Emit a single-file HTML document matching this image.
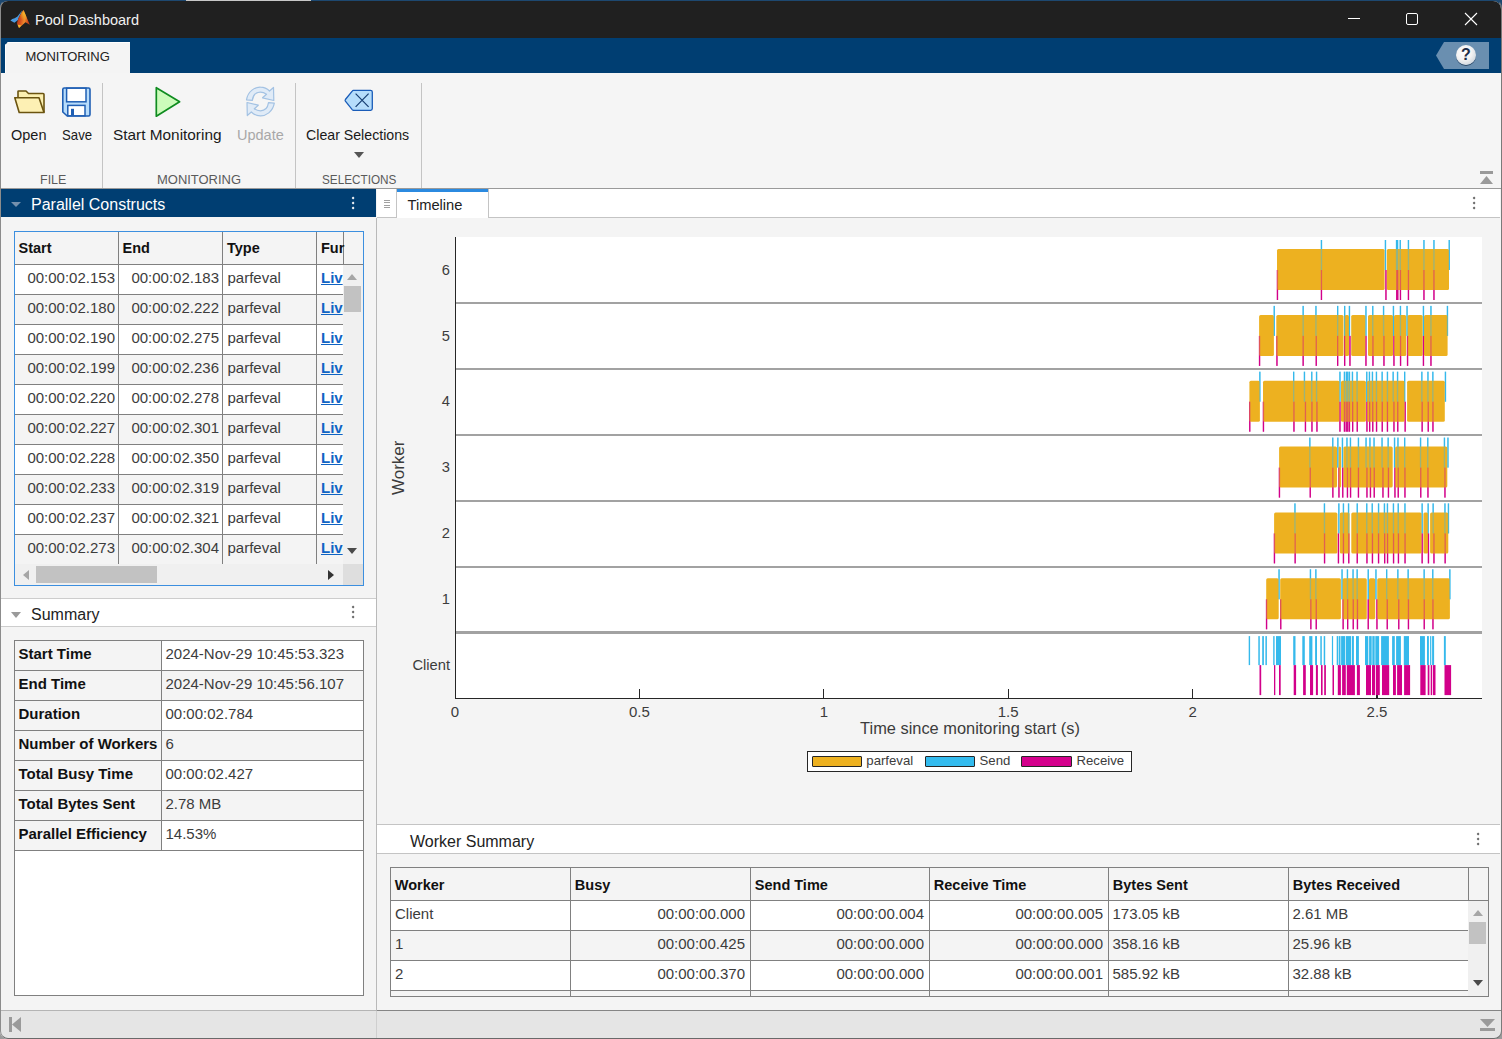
<!DOCTYPE html>
<html><head><meta charset="utf-8">
<style>
*{margin:0;padding:0;box-sizing:border-box}
html,body{width:1502px;height:1039px;overflow:hidden;background:linear-gradient(#1d4870 0,#1d4870 500px,#9a9a9a 500px);font-family:"Liberation Sans",sans-serif}
.a{position:absolute}
.t{position:absolute;white-space:nowrap;line-height:1}
#win{position:absolute;left:0;top:0;width:1502px;height:1039px;overflow:hidden;background:#f4f4f4;clip-path:inset(1px 1px 0 0 round 8px 8px 8px 8px)}
.sep{position:absolute;width:1px;background:#c4c4c4}
.lbl{position:absolute;white-space:nowrap;line-height:1;font-size:12.5px;color:#5a5a5a}
.btn{position:absolute;white-space:nowrap;line-height:1;font-size:14.5px;color:#1a1a1a}
.dots{position:absolute;width:3px;height:14px}
.dots i{position:absolute;left:0;width:3px;height:3px;border-radius:1px;transform:rotate(45deg)}
</style></head><body>
<div class="a" style="left:186px;top:0;width:125px;height:1px;background:#c8c8c8"></div>
<div id="win">
 <!-- title bar -->
 <div class="a" style="left:0;top:0;width:1502px;height:38px;background:#202020"></div>
 <svg class="a" style="left:0;top:0" width="40" height="40" viewBox="0 0 40 40">
  <defs><linearGradient id="lg1" x1="0" y1="0" x2="1" y2="0.3"><stop offset="0" stop-color="#9a2216"/><stop offset="0.45" stop-color="#d9541e"/><stop offset="0.7" stop-color="#f08a2c"/><stop offset="1" stop-color="#c8401a"/></linearGradient>
  <radialGradient id="rg1" cx="0.55" cy="0.2" r="0.4"><stop offset="0" stop-color="#f6c02a" stop-opacity="0.9"/><stop offset="1" stop-color="#f6c02a" stop-opacity="0"/></radialGradient></defs>
  <path d="M10.4 20.4 Q12 18.5 14.7 18.2 L17.5 16.5 L22.5 10.1 L20.5 14 L18.8 17.5 L17.9 20.1 L14.4 22.8 Z" fill="#4a9ae0"/>
  <path d="M23.6 9.9 L29.8 24.7 L25.5 22.3 L19 27.9 L16.9 23.3 L18.5 18 L21.5 12.5 Z" fill="url(#lg1)"/>
  <path d="M23.6 9.9 L29.8 24.7 L25.5 22.3 L19 27.9 L16.9 23.3 L18.5 18 L21.5 12.5 Z" fill="url(#rg1)"/>
  <path d="M17.5 24.5 L19 27.9 L21.5 25.5 Z" fill="#f2b830"/>
 </svg>
 <div class="t" style="left:35px;top:13px;font-size:14.5px;color:#f0f0f0">Pool Dashboard</div>
 <!-- window controls -->
 <div class="a" style="left:1348px;top:18px;width:12px;height:1px;background:#fff"></div>
 <div class="a" style="left:1406px;top:13px;width:12px;height:12px;border:1px solid #fff;border-radius:2px"></div>
 <svg class="a" style="left:1464px;top:12px" width="14" height="14" viewBox="0 0 14 14"><path d="M1 1 L13 13 M13 1 L1 13" stroke="#fff" stroke-width="1.1"/></svg>
 <!-- tab strip -->
 <div class="a" style="left:0;top:38px;width:1502px;height:35px;background:#003e72"></div>
 <div class="a" style="left:5px;top:42px;width:125px;height:31px;background:#f4f4f4;border-left:1px solid #fff;border-top:1px solid #fff;clip-path:polygon(3px 0,100% 0,100% 100%,0 100%,0 3px)"></div>
 <div class="t" style="left:25.5px;top:50px;font-size:13px;color:#222">MONITORING</div>
 <!-- help -->
 <div class="a" style="left:1436px;top:42px;width:53px;height:27px;background:#6a8fb0;clip-path:polygon(8px 0,100% 0,100% 100%,8px 100%,0 50%)"></div>
 <div class="a" style="left:1456px;top:45px;width:20px;height:20px;border-radius:50%;background:radial-gradient(circle at 40% 35%,#ffffff 0,#f2f2f2 45%,#b8c4d0 100%);box-shadow:0 1px 0 #2c4866"></div>
 <div class="t" style="left:1456px;width:20px;text-align:center;top:47.2px;font-size:16px;font-weight:bold;color:#1e2d47">?</div>
 <!-- ribbon -->
 <div class="a" style="left:0;top:73px;width:1502px;height:115px;background:#f5f5f5"></div>
 <div class="a" style="left:0;top:188px;width:1502px;height:1px;background:#9a9a9a"></div>
 <div class="sep" style="left:102px;top:83px;height:105px"></div>
 <div class="sep" style="left:295px;top:83px;height:105px"></div>
 <div class="sep" style="left:421px;top:83px;height:105px"></div>
 <!-- folder icon -->
 <svg class="a" style="left:13px;top:89px" width="34" height="26" viewBox="0 0 34 26">
  <path d="M5 8 V2.5 Q5 2 5.5 2 H13 L15.5 4.5 H30 Q31 4.5 31 5.5 V23.5" fill="#fbefb0" stroke="#6b5410" stroke-width="1.6" stroke-linejoin="round"/>
  <path d="M1.8 8.8 H26 L31 23.5 H6.2 Z" fill="#fdf0b4" stroke="#6b5410" stroke-width="1.6" stroke-linejoin="round"/>
 </svg>
 <!-- save icon -->
 <svg class="a" style="left:61px;top:86px;transform:translate(0,0.8px)" width="32" height="32" viewBox="0 0 32 32">
  <path d="M1.8 2.6 Q1.8 1.2 3.2 1.2 H27.6 Q29 1.2 29 2.6 V27.8 Q29 29.2 27.6 29.2 H6.2 L1.8 25.2 Z" fill="#b7dcfb" stroke="#1f5fb4" stroke-width="1.6" stroke-linejoin="round"/>
  <rect x="5.6" y="1.4" width="19.4" height="13.6" fill="#fff" stroke="#1f5fb4" stroke-width="1.5"/>
  <rect x="6.8" y="18.6" width="17.2" height="10.4" fill="#fff" stroke="#1f5fb4" stroke-width="1.5"/>
  <rect x="10" y="22" width="3" height="6.5" fill="#1f5fb4"/>
 </svg>
 <div class="btn" style="left:11px;top:128px">Open</div>
 <div class="btn" style="left:62px;top:128px;transform:scaleX(0.91);transform-origin:0 0">Save</div>
 <div class="lbl" style="left:40px;top:174px">FILE</div>
 <!-- play icon -->
 <svg class="a" style="left:154px;top:86px" width="28" height="32" viewBox="0 0 28 32"><path d="M2.3 1.7 L25.6 15.8 L2.3 30.2 Z" fill="#ccfcbb" stroke="#0f8c20" stroke-width="1.7" stroke-linejoin="round"/></svg>
 <div class="btn" style="left:113px;top:128px;transform:scaleX(1.06);transform-origin:0 0">Start Monitoring</div>
 <!-- update icon (disabled) -->
 <svg class="a" style="left:236px;top:80px" width="50" height="42" viewBox="0 0 50 42">
  <path id="ua" d="M10.5 19.8 C12 11 19 7 24.5 7.2 C28 7.2 31.5 9 33.5 11 L37.5 7.5 L37.8 20.5 L26.5 17.8 L30.5 14.2 C28.5 12.8 26.5 12.2 24.3 12.2 C20 12.2 17 15.5 16.3 20.3 Z" fill="#e0ebf7" stroke="#a3c2e3" stroke-width="1.2" stroke-linejoin="round"/>
  <path d="M10.5 19.8 C12 11 19 7 24.5 7.2 C28 7.2 31.5 9 33.5 11 L37.5 7.5 L37.8 20.5 L26.5 17.8 L30.5 14.2 C28.5 12.8 26.5 12.2 24.3 12.2 C20 12.2 17 15.5 16.3 20.3 Z" transform="rotate(180 24.4 21.5)" fill="#e0ebf7" stroke="#a3c2e3" stroke-width="1.2" stroke-linejoin="round"/>
 </svg>
 <div class="btn" style="left:237px;top:128px;color:#a8a8a8">Update</div>
 <div class="lbl" style="left:157px;top:174px;transform:scaleX(1.037);transform-origin:0 0">MONITORING</div>
 <!-- clear selections icon -->
 <svg class="a" style="left:335px;top:82px" width="50" height="38" viewBox="0 0 50 38">
  <path d="M18.3 8.4 H35.6 Q37.3 8.4 37.3 10.1 V26.6 Q37.3 28.3 35.6 28.3 H18.6 Q17.8 28.3 17.2 27.6 L10.4 19.2 Q9.8 18.35 10.4 17.5 L17.2 9.1 Q17.7 8.4 18.3 8.4 Z" fill="#b5ddfb" stroke="#1a5cb8" stroke-width="1.3"/>
  <path d="M20.6 11.6 L33.6 24.8 M33.6 11.6 L20.6 24.8" stroke="#163e72" stroke-width="1.2"/>
 </svg>
 <div class="btn" style="left:306px;top:128px;transform:scaleX(0.977);transform-origin:0 0">Clear Selections</div>
 <svg class="a" style="left:354px;top:152px" width="10" height="6" viewBox="0 0 10 6"><path d="M0 0 H10 L5 6 Z" fill="#555"/></svg>
 <div class="lbl" style="left:321.5px;top:174px;transform:scaleX(0.94);transform-origin:0 0">SELECTIONS</div>
 <!-- collapse ribbon icon -->
 <div class="a" style="left:1480px;top:171px;width:13px;height:3px;background:#9a9a9a"></div>
 <svg class="a" style="left:1480px;top:176px" width="13" height="8" viewBox="0 0 13 8"><path d="M0 8 L6.5 0 L13 8 Z" fill="#9a9a9a"/></svg>

 <!-- LEFT PANEL -->
 <div class="a" style="left:1px;top:189px;width:375px;height:28px;background:#003e72"></div>
<svg class="a" style="left:11px;top:202px" width="10" height="6" viewBox="0 0 10 6"><path d="M0 0 H10 L5 5 Z" fill="#7590ad"/></svg>
<div class="t" style="left:31px;top:196.5px;font-size:16px;color:#fff">Parallel Constructs</div>
<div class="a" style="left:352.40px;top:197.40px;width:2.2px;height:2.2px;background:#fff;transform:rotate(45deg)"></div><div class="a" style="left:352.40px;top:202.40px;width:2.2px;height:2.2px;background:#fff;transform:rotate(45deg)"></div><div class="a" style="left:352.40px;top:207.40px;width:2.2px;height:2.2px;background:#fff;transform:rotate(45deg)"></div>
<div class="a" style="left:376px;top:218px;width:1px;height:792px;background:#b9b9b9"></div>
<div class="a" style="left:14px;top:231px;width:350px;height:355px;border:1px solid #3c8fdf;background:#f2f2f2"></div>
<div class="a" style="left:15px;top:232px;width:348px;height:32px;background:#f4f4f4"></div>
<div class="a" style="left:15px;top:264px;width:348px;height:1px;background:#808080"></div>
<div class="a" style="left:118px;top:232px;width:1px;height:32px;background:#808080"></div>
<div class="a" style="left:222px;top:232px;width:1px;height:32px;background:#808080"></div>
<div class="a" style="left:316px;top:232px;width:1px;height:32px;background:#808080"></div>
<div class="a" style="left:343px;top:232px;width:1px;height:32px;background:#808080"></div>
<div class="t" style="left:18.5px;top:241.3px;font-size:14.5px;font-weight:bold;color:#111">Start</div>
<div class="t" style="left:122.5px;top:241.3px;font-size:14.5px;font-weight:bold;color:#111">End</div>
<div class="t" style="left:227.0px;top:241.3px;font-size:14.5px;font-weight:bold;color:#111">Type</div>
<div class="t" style="left:321.0px;top:241.3px;font-size:14.5px;font-weight:bold;color:#111">Fur</div>
<div class="a" style="left:15px;top:265px;width:328px;height:299px;overflow:hidden">
<div class="a" style="left:0;top:0.0px;width:328px;height:30px;background:#ffffff"></div>
<div class="a" style="left:0;top:29.0px;width:328px;height:1px;background:#808080"></div>
<div class="t" style="left:0;width:100px;text-align:right;top:4.8px;font-size:15px;color:#3c3c3c">00:00:02.153</div>
<div class="t" style="left:104px;width:100px;text-align:right;top:4.8px;font-size:15px;color:#3c3c3c">00:00:02.183</div>
<div class="t" style="left:212.5px;top:4.8px;font-size:15px;color:#3c3c3c">parfeval</div>
<div class="t" style="left:306px;top:4.8px;font-size:15px;color:#1064c4;font-weight:bold;text-decoration:underline">Liv</div>
<div class="a" style="left:0;top:30.1px;width:328px;height:30px;background:#f4f4f4"></div>
<div class="a" style="left:0;top:59.0px;width:328px;height:1px;background:#808080"></div>
<div class="t" style="left:0;width:100px;text-align:right;top:34.9px;font-size:15px;color:#3c3c3c">00:00:02.180</div>
<div class="t" style="left:104px;width:100px;text-align:right;top:34.9px;font-size:15px;color:#3c3c3c">00:00:02.222</div>
<div class="t" style="left:212.5px;top:34.9px;font-size:15px;color:#3c3c3c">parfeval</div>
<div class="t" style="left:306px;top:34.9px;font-size:15px;color:#1064c4;font-weight:bold;text-decoration:underline">Liv</div>
<div class="a" style="left:0;top:60.1px;width:328px;height:30px;background:#ffffff"></div>
<div class="a" style="left:0;top:89.1px;width:328px;height:1px;background:#808080"></div>
<div class="t" style="left:0;width:100px;text-align:right;top:64.9px;font-size:15px;color:#3c3c3c">00:00:02.190</div>
<div class="t" style="left:104px;width:100px;text-align:right;top:64.9px;font-size:15px;color:#3c3c3c">00:00:02.275</div>
<div class="t" style="left:212.5px;top:64.9px;font-size:15px;color:#3c3c3c">parfeval</div>
<div class="t" style="left:306px;top:64.9px;font-size:15px;color:#1064c4;font-weight:bold;text-decoration:underline">Liv</div>
<div class="a" style="left:0;top:90.2px;width:328px;height:30px;background:#f4f4f4"></div>
<div class="a" style="left:0;top:119.2px;width:328px;height:1px;background:#808080"></div>
<div class="t" style="left:0;width:100px;text-align:right;top:95.0px;font-size:15px;color:#3c3c3c">00:00:02.199</div>
<div class="t" style="left:104px;width:100px;text-align:right;top:95.0px;font-size:15px;color:#3c3c3c">00:00:02.236</div>
<div class="t" style="left:212.5px;top:95.0px;font-size:15px;color:#3c3c3c">parfeval</div>
<div class="t" style="left:306px;top:95.0px;font-size:15px;color:#1064c4;font-weight:bold;text-decoration:underline">Liv</div>
<div class="a" style="left:0;top:120.2px;width:328px;height:30px;background:#ffffff"></div>
<div class="a" style="left:0;top:149.2px;width:328px;height:1px;background:#808080"></div>
<div class="t" style="left:0;width:100px;text-align:right;top:125.0px;font-size:15px;color:#3c3c3c">00:00:02.220</div>
<div class="t" style="left:104px;width:100px;text-align:right;top:125.0px;font-size:15px;color:#3c3c3c">00:00:02.278</div>
<div class="t" style="left:212.5px;top:125.0px;font-size:15px;color:#3c3c3c">parfeval</div>
<div class="t" style="left:306px;top:125.0px;font-size:15px;color:#1064c4;font-weight:bold;text-decoration:underline">Liv</div>
<div class="a" style="left:0;top:150.2px;width:328px;height:30px;background:#f4f4f4"></div>
<div class="a" style="left:0;top:179.2px;width:328px;height:1px;background:#808080"></div>
<div class="t" style="left:0;width:100px;text-align:right;top:155.1px;font-size:15px;color:#3c3c3c">00:00:02.227</div>
<div class="t" style="left:104px;width:100px;text-align:right;top:155.1px;font-size:15px;color:#3c3c3c">00:00:02.301</div>
<div class="t" style="left:212.5px;top:155.1px;font-size:15px;color:#3c3c3c">parfeval</div>
<div class="t" style="left:306px;top:155.1px;font-size:15px;color:#1064c4;font-weight:bold;text-decoration:underline">Liv</div>
<div class="a" style="left:0;top:180.3px;width:328px;height:30px;background:#ffffff"></div>
<div class="a" style="left:0;top:209.3px;width:328px;height:1px;background:#808080"></div>
<div class="t" style="left:0;width:100px;text-align:right;top:185.1px;font-size:15px;color:#3c3c3c">00:00:02.228</div>
<div class="t" style="left:104px;width:100px;text-align:right;top:185.1px;font-size:15px;color:#3c3c3c">00:00:02.350</div>
<div class="t" style="left:212.5px;top:185.1px;font-size:15px;color:#3c3c3c">parfeval</div>
<div class="t" style="left:306px;top:185.1px;font-size:15px;color:#1064c4;font-weight:bold;text-decoration:underline">Liv</div>
<div class="a" style="left:0;top:210.3px;width:328px;height:30px;background:#f4f4f4"></div>
<div class="a" style="left:0;top:239.3px;width:328px;height:1px;background:#808080"></div>
<div class="t" style="left:0;width:100px;text-align:right;top:215.2px;font-size:15px;color:#3c3c3c">00:00:02.233</div>
<div class="t" style="left:104px;width:100px;text-align:right;top:215.2px;font-size:15px;color:#3c3c3c">00:00:02.319</div>
<div class="t" style="left:212.5px;top:215.2px;font-size:15px;color:#3c3c3c">parfeval</div>
<div class="t" style="left:306px;top:215.2px;font-size:15px;color:#1064c4;font-weight:bold;text-decoration:underline">Liv</div>
<div class="a" style="left:0;top:240.4px;width:328px;height:30px;background:#ffffff"></div>
<div class="a" style="left:0;top:269.4px;width:328px;height:1px;background:#808080"></div>
<div class="t" style="left:0;width:100px;text-align:right;top:245.2px;font-size:15px;color:#3c3c3c">00:00:02.237</div>
<div class="t" style="left:104px;width:100px;text-align:right;top:245.2px;font-size:15px;color:#3c3c3c">00:00:02.321</div>
<div class="t" style="left:212.5px;top:245.2px;font-size:15px;color:#3c3c3c">parfeval</div>
<div class="t" style="left:306px;top:245.2px;font-size:15px;color:#1064c4;font-weight:bold;text-decoration:underline">Liv</div>
<div class="a" style="left:0;top:270.4px;width:328px;height:30px;background:#f4f4f4"></div>
<div class="a" style="left:0;top:299.4px;width:328px;height:1px;background:#808080"></div>
<div class="t" style="left:0;width:100px;text-align:right;top:275.3px;font-size:15px;color:#3c3c3c">00:00:02.273</div>
<div class="t" style="left:104px;width:100px;text-align:right;top:275.3px;font-size:15px;color:#3c3c3c">00:00:02.304</div>
<div class="t" style="left:212.5px;top:275.3px;font-size:15px;color:#3c3c3c">parfeval</div>
<div class="t" style="left:306px;top:275.3px;font-size:15px;color:#1064c4;font-weight:bold;text-decoration:underline">Liv</div>
<div class="a" style="left:103px;top:0;width:1px;height:299px;background:#808080"></div>
<div class="a" style="left:207px;top:0;width:1px;height:299px;background:#808080"></div>
<div class="a" style="left:301px;top:0;width:1px;height:299px;background:#808080"></div>
</div>
<div class="a" style="left:343px;top:265px;width:20px;height:299px;background:#f0f0f0"></div>
<svg class="a" style="left:347px;top:274px" width="10" height="6" viewBox="0 0 10 6"><path d="M0 6 L5 0 L10 6 Z" fill="#a6a6a6"/></svg>
<div class="a" style="left:344px;top:286px;width:17px;height:26px;background:#c2c2c2"></div>
<svg class="a" style="left:347px;top:548px" width="10" height="6" viewBox="0 0 10 6"><path d="M0 0 L10 0 L5 6 Z" fill="#4a4a4a"/></svg>
<div class="a" style="left:15px;top:564px;width:348px;height:21px;background:#f0f0f0"></div>
<div class="a" style="left:343px;top:564px;width:20px;height:21px;background:#dedede"></div>
<svg class="a" style="left:23px;top:570px" width="6" height="10" viewBox="0 0 6 10"><path d="M6 0 V10 L0 5 Z" fill="#a6a6a6"/></svg>
<div class="a" style="left:36px;top:566px;width:121px;height:17px;background:#c2c2c2"></div>
<svg class="a" style="left:328px;top:570px" width="6" height="10" viewBox="0 0 6 10"><path d="M0 0 V10 L6 5 Z" fill="#333"/></svg>
<div class="a" style="left:1px;top:598px;width:375px;height:1px;background:#cdcdcd"></div>
<div class="a" style="left:1px;top:599px;width:375px;height:27px;background:#fff"></div>
<div class="a" style="left:1px;top:626px;width:375px;height:1px;background:#cdcdcd"></div>
<svg class="a" style="left:11px;top:612px" width="10" height="6" viewBox="0 0 10 6"><path d="M0 0 H10 L5 6 Z" fill="#9a9a9a"/></svg>
<div class="t" style="left:31px;top:606.5px;font-size:16px;color:#222">Summary</div>
<div class="a" style="left:352.40px;top:606.40px;width:2.2px;height:2.2px;background:#606060;transform:rotate(45deg)"></div><div class="a" style="left:352.40px;top:611.40px;width:2.2px;height:2.2px;background:#606060;transform:rotate(45deg)"></div><div class="a" style="left:352.40px;top:616.40px;width:2.2px;height:2.2px;background:#606060;transform:rotate(45deg)"></div>
<div class="a" style="left:14px;top:640px;width:350px;height:356px;border:1px solid #808080;background:#fff"></div>
<div class="a" style="left:15px;top:641px;width:146px;height:29px;background:#f4f4f4"></div>
<div class="a" style="left:162px;top:641px;width:201px;height:29px;background:#fff"></div>
<div class="a" style="left:15px;top:670px;width:348px;height:1px;background:#808080"></div>
<div class="t" style="left:18.5px;top:646.3px;font-size:15px;font-weight:bold;color:#111">Start Time</div>
<div class="t" style="left:165.5px;top:646.3px;font-size:15px;color:#3c3c3c">2024-Nov-29 10:45:53.323</div>
<div class="a" style="left:15px;top:671px;width:146px;height:29px;background:#f4f4f4"></div>
<div class="a" style="left:162px;top:671px;width:201px;height:29px;background:#f4f4f4"></div>
<div class="a" style="left:15px;top:700px;width:348px;height:1px;background:#808080"></div>
<div class="t" style="left:18.5px;top:676.3px;font-size:15px;font-weight:bold;color:#111">End Time</div>
<div class="t" style="left:165.5px;top:676.3px;font-size:15px;color:#3c3c3c">2024-Nov-29 10:45:56.107</div>
<div class="a" style="left:15px;top:701px;width:146px;height:29px;background:#f4f4f4"></div>
<div class="a" style="left:162px;top:701px;width:201px;height:29px;background:#fff"></div>
<div class="a" style="left:15px;top:730px;width:348px;height:1px;background:#808080"></div>
<div class="t" style="left:18.5px;top:706.3px;font-size:15px;font-weight:bold;color:#111">Duration</div>
<div class="t" style="left:165.5px;top:706.3px;font-size:15px;color:#3c3c3c">00:00:02.784</div>
<div class="a" style="left:15px;top:731px;width:146px;height:29px;background:#f4f4f4"></div>
<div class="a" style="left:162px;top:731px;width:201px;height:29px;background:#f4f4f4"></div>
<div class="a" style="left:15px;top:760px;width:348px;height:1px;background:#808080"></div>
<div class="t" style="left:18.5px;top:736.3px;font-size:15px;font-weight:bold;color:#111">Number of Workers</div>
<div class="t" style="left:165.5px;top:736.3px;font-size:15px;color:#3c3c3c">6</div>
<div class="a" style="left:15px;top:761px;width:146px;height:29px;background:#f4f4f4"></div>
<div class="a" style="left:162px;top:761px;width:201px;height:29px;background:#fff"></div>
<div class="a" style="left:15px;top:790px;width:348px;height:1px;background:#808080"></div>
<div class="t" style="left:18.5px;top:766.3px;font-size:15px;font-weight:bold;color:#111">Total Busy Time</div>
<div class="t" style="left:165.5px;top:766.3px;font-size:15px;color:#3c3c3c">00:00:02.427</div>
<div class="a" style="left:15px;top:791px;width:146px;height:29px;background:#f4f4f4"></div>
<div class="a" style="left:162px;top:791px;width:201px;height:29px;background:#f4f4f4"></div>
<div class="a" style="left:15px;top:820px;width:348px;height:1px;background:#808080"></div>
<div class="t" style="left:18.5px;top:796.3px;font-size:15px;font-weight:bold;color:#111">Total Bytes Sent</div>
<div class="t" style="left:165.5px;top:796.3px;font-size:15px;color:#3c3c3c">2.78 MB</div>
<div class="a" style="left:15px;top:821px;width:146px;height:29px;background:#f4f4f4"></div>
<div class="a" style="left:162px;top:821px;width:201px;height:29px;background:#fff"></div>
<div class="a" style="left:15px;top:850px;width:348px;height:1px;background:#808080"></div>
<div class="t" style="left:18.5px;top:826.3px;font-size:15px;font-weight:bold;color:#111">Parallel Efficiency</div>
<div class="t" style="left:165.5px;top:826.3px;font-size:15px;color:#3c3c3c">14.53%</div>
<div class="a" style="left:161px;top:641px;width:1px;height:210px;background:#808080"></div>
 <!-- RIGHT PANEL -->
 <div class="a" style="left:377px;top:189px;width:1123px;height:28px;background:#fff"></div>
<div class="a" style="left:377px;top:217px;width:1123px;height:1px;background:#c4c4c4"></div>
<div class="a" style="left:396px;top:189px;width:1px;height:29px;background:#c4c4c4"></div>
<div class="a" style="left:384px;top:199.5px;width:6px;height:1px;background:#a0a0a0"></div>
<div class="a" style="left:384px;top:202.1px;width:6px;height:1px;background:#a0a0a0"></div>
<div class="a" style="left:384px;top:204.7px;width:6px;height:1px;background:#a0a0a0"></div>
<div class="a" style="left:384px;top:207.3px;width:6px;height:1px;background:#a0a0a0"></div>
<div class="a" style="left:397px;top:189px;width:91px;height:29px;background:#fff"></div>
<div class="a" style="left:397px;top:189px;width:91px;height:3px;background:#2b8ae0"></div>
<div class="a" style="left:488px;top:189px;width:1px;height:29px;background:#c4c4c4"></div>
<div class="t" style="left:407.5px;top:198.4px;font-size:14.7px;color:#222;">Timeline</div>
<div class="a" style="left:1473.40px;top:197.40px;width:2.2px;height:2.2px;background:#606060;transform:rotate(45deg)"></div><div class="a" style="left:1473.40px;top:202.40px;width:2.2px;height:2.2px;background:#606060;transform:rotate(45deg)"></div><div class="a" style="left:1473.40px;top:207.40px;width:2.2px;height:2.2px;background:#606060;transform:rotate(45deg)"></div>
<div class="a" style="left:456px;top:237px;width:1026px;height:461px;background:#fff"></div>
<div class="a" style="left:456px;top:302px;width:1026px;height:2px;background:#a2a2a2"></div>
<div class="a" style="left:456px;top:368px;width:1026px;height:2px;background:#a2a2a2"></div>
<div class="a" style="left:456px;top:434px;width:1026px;height:2px;background:#a2a2a2"></div>
<div class="a" style="left:456px;top:500px;width:1026px;height:2px;background:#a2a2a2"></div>
<div class="a" style="left:456px;top:566px;width:1026px;height:2px;background:#a2a2a2"></div>
<div class="a" style="left:456px;top:631px;width:1026px;height:3px;background:#a2a2a2"></div>
<div class="a" style="left:454.6px;top:237px;width:1.4px;height:462px;background:#262626"></div>
<div class="a" style="left:455px;top:697.7px;width:1026.5px;height:1.4px;background:#262626"></div>
<div class="t" style="left:255.0px;width:400px;text-align:center;top:704.3px;font-size:15px;color:#3c3c3c;">0</div>
<div class="a" style="left:638.8px;top:689px;width:1.3px;height:9px;background:#262626"></div>
<div class="t" style="left:439.4px;width:400px;text-align:center;top:704.3px;font-size:15px;color:#3c3c3c;">0.5</div>
<div class="a" style="left:823.2px;top:689px;width:1.3px;height:9px;background:#262626"></div>
<div class="t" style="left:623.8px;width:400px;text-align:center;top:704.3px;font-size:15px;color:#3c3c3c;">1</div>
<div class="a" style="left:1007.6px;top:689px;width:1.3px;height:9px;background:#262626"></div>
<div class="t" style="left:808.2px;width:400px;text-align:center;top:704.3px;font-size:15px;color:#3c3c3c;">1.5</div>
<div class="a" style="left:1192.0px;top:689px;width:1.3px;height:9px;background:#262626"></div>
<div class="t" style="left:992.6px;width:400px;text-align:center;top:704.3px;font-size:15px;color:#3c3c3c;">2</div>
<div class="a" style="left:1376.4px;top:689px;width:1.3px;height:9px;background:#262626"></div>
<div class="t" style="left:1177.0px;width:400px;text-align:center;top:704.3px;font-size:15px;color:#3c3c3c;">2.5</div>
<svg class="a" style="left:0;top:0" width="1502" height="1039" viewBox="0 0 1502 1039">
<rect x="1320.8" y="240.0" width="1.3" height="30" fill="#35b9ec"/>
<rect x="1384.8" y="240.0" width="1.3" height="30" fill="#35b9ec"/>
<rect x="1395.9" y="240.0" width="1.3" height="30" fill="#35b9ec"/>
<rect x="1396.9" y="240.0" width="1.3" height="30" fill="#35b9ec"/>
<rect x="1399.6" y="240.0" width="1.3" height="30" fill="#35b9ec"/>
<rect x="1407.8" y="240.0" width="1.3" height="30" fill="#35b9ec"/>
<rect x="1423.3" y="240.0" width="1.3" height="30" fill="#35b9ec"/>
<rect x="1433.3" y="240.0" width="1.3" height="30" fill="#35b9ec"/>
<rect x="1448.6" y="240.0" width="1.3" height="30" fill="#35b9ec"/>
<rect x="1276.8" y="270.0" width="1.3" height="30" fill="#d2008a"/>
<rect x="1320.8" y="270.0" width="1.3" height="30" fill="#d2008a"/>
<rect x="1385.3" y="270.0" width="1.3" height="30" fill="#d2008a"/>
<rect x="1396.1" y="270.0" width="1.3" height="30" fill="#d2008a"/>
<rect x="1397.1" y="270.0" width="1.3" height="30" fill="#d2008a"/>
<rect x="1399.8" y="270.0" width="1.3" height="30" fill="#d2008a"/>
<rect x="1407.8" y="270.0" width="1.3" height="30" fill="#d2008a"/>
<rect x="1423.3" y="270.0" width="1.3" height="30" fill="#d2008a"/>
<rect x="1433.3" y="270.0" width="1.3" height="30" fill="#d2008a"/>
<rect x="1277.0" y="249.0" width="107.6" height="41" rx="1.5" fill="#edb120"/>
<rect x="1386.8" y="249.0" width="62.2" height="41" rx="1.5" fill="#edb120"/>
<rect x="1320.8" y="240.0" width="1.3" height="30" fill="#35b9ec" opacity="0.45"/>
<rect x="1384.8" y="240.0" width="1.3" height="30" fill="#35b9ec" opacity="0.45"/>
<rect x="1395.9" y="240.0" width="1.3" height="30" fill="#35b9ec" opacity="0.45"/>
<rect x="1396.9" y="240.0" width="1.3" height="30" fill="#35b9ec" opacity="0.45"/>
<rect x="1399.6" y="240.0" width="1.3" height="30" fill="#35b9ec" opacity="0.45"/>
<rect x="1407.8" y="240.0" width="1.3" height="30" fill="#35b9ec" opacity="0.45"/>
<rect x="1423.3" y="240.0" width="1.3" height="30" fill="#35b9ec" opacity="0.45"/>
<rect x="1433.3" y="240.0" width="1.3" height="30" fill="#35b9ec" opacity="0.45"/>
<rect x="1448.6" y="240.0" width="1.3" height="30" fill="#35b9ec" opacity="0.45"/>
<rect x="1276.8" y="270.0" width="1.3" height="30" fill="#d2008a" opacity="0.45"/>
<rect x="1320.8" y="270.0" width="1.3" height="30" fill="#d2008a" opacity="0.45"/>
<rect x="1385.3" y="270.0" width="1.3" height="30" fill="#d2008a" opacity="0.45"/>
<rect x="1396.1" y="270.0" width="1.3" height="30" fill="#d2008a" opacity="0.45"/>
<rect x="1397.1" y="270.0" width="1.3" height="30" fill="#d2008a" opacity="0.45"/>
<rect x="1399.8" y="270.0" width="1.3" height="30" fill="#d2008a" opacity="0.45"/>
<rect x="1407.8" y="270.0" width="1.3" height="30" fill="#d2008a" opacity="0.45"/>
<rect x="1423.3" y="270.0" width="1.3" height="30" fill="#d2008a" opacity="0.45"/>
<rect x="1433.3" y="270.0" width="1.3" height="30" fill="#d2008a" opacity="0.45"/>
<rect x="1273.6" y="305.9" width="1.3" height="30" fill="#35b9ec"/>
<rect x="1302.5" y="305.9" width="1.3" height="30" fill="#35b9ec"/>
<rect x="1315.3" y="305.9" width="1.3" height="30" fill="#35b9ec"/>
<rect x="1337.0" y="305.9" width="1.3" height="30" fill="#35b9ec"/>
<rect x="1344.0" y="305.9" width="1.3" height="30" fill="#35b9ec"/>
<rect x="1348.8" y="305.9" width="1.3" height="30" fill="#35b9ec"/>
<rect x="1365.3" y="305.9" width="1.3" height="30" fill="#35b9ec"/>
<rect x="1372.1" y="305.9" width="1.3" height="30" fill="#35b9ec"/>
<rect x="1382.9" y="305.9" width="1.3" height="30" fill="#35b9ec"/>
<rect x="1392.8" y="305.9" width="1.3" height="30" fill="#35b9ec"/>
<rect x="1399.8" y="305.9" width="1.3" height="30" fill="#35b9ec"/>
<rect x="1406.4" y="305.9" width="1.3" height="30" fill="#35b9ec"/>
<rect x="1422.8" y="305.9" width="1.3" height="30" fill="#35b9ec"/>
<rect x="1430.3" y="305.9" width="1.3" height="30" fill="#35b9ec"/>
<rect x="1446.8" y="305.9" width="1.3" height="30" fill="#35b9ec"/>
<rect x="1258.9" y="335.9" width="1.3" height="30" fill="#d2008a"/>
<rect x="1276.3" y="335.9" width="1.3" height="30" fill="#d2008a"/>
<rect x="1302.5" y="335.9" width="1.3" height="30" fill="#d2008a"/>
<rect x="1315.6" y="335.9" width="1.3" height="30" fill="#d2008a"/>
<rect x="1337.0" y="335.9" width="1.3" height="30" fill="#d2008a"/>
<rect x="1344.0" y="335.9" width="1.3" height="30" fill="#d2008a"/>
<rect x="1349.3" y="335.9" width="1.3" height="30" fill="#d2008a"/>
<rect x="1365.3" y="335.9" width="1.3" height="30" fill="#d2008a"/>
<rect x="1372.3" y="335.9" width="1.3" height="30" fill="#d2008a"/>
<rect x="1383.3" y="335.9" width="1.3" height="30" fill="#d2008a"/>
<rect x="1393.3" y="335.9" width="1.3" height="30" fill="#d2008a"/>
<rect x="1399.9" y="335.9" width="1.3" height="30" fill="#d2008a"/>
<rect x="1406.9" y="335.9" width="1.3" height="30" fill="#d2008a"/>
<rect x="1422.8" y="335.9" width="1.3" height="30" fill="#d2008a"/>
<rect x="1430.3" y="335.9" width="1.3" height="30" fill="#d2008a"/>
<rect x="1259.1" y="314.9" width="14.8" height="41" rx="1.5" fill="#edb120"/>
<rect x="1276.3" y="314.9" width="67.2" height="41" rx="1.5" fill="#edb120"/>
<rect x="1344.5" y="314.9" width="4.5" height="41" rx="1.5" fill="#edb120"/>
<rect x="1351.2" y="314.9" width="14.3" height="41" rx="1.5" fill="#edb120"/>
<rect x="1368.0" y="314.9" width="25.0" height="41" rx="1.5" fill="#edb120"/>
<rect x="1394.0" y="314.9" width="12.2" height="41" rx="1.5" fill="#edb120"/>
<rect x="1407.5" y="314.9" width="15.2" height="41" rx="1.5" fill="#edb120"/>
<rect x="1424.0" y="314.9" width="23.6" height="41" rx="1.5" fill="#edb120"/>
<rect x="1273.6" y="305.9" width="1.3" height="30" fill="#35b9ec" opacity="0.45"/>
<rect x="1302.5" y="305.9" width="1.3" height="30" fill="#35b9ec" opacity="0.45"/>
<rect x="1315.3" y="305.9" width="1.3" height="30" fill="#35b9ec" opacity="0.45"/>
<rect x="1337.0" y="305.9" width="1.3" height="30" fill="#35b9ec" opacity="0.45"/>
<rect x="1344.0" y="305.9" width="1.3" height="30" fill="#35b9ec" opacity="0.45"/>
<rect x="1348.8" y="305.9" width="1.3" height="30" fill="#35b9ec" opacity="0.45"/>
<rect x="1365.3" y="305.9" width="1.3" height="30" fill="#35b9ec" opacity="0.45"/>
<rect x="1372.1" y="305.9" width="1.3" height="30" fill="#35b9ec" opacity="0.45"/>
<rect x="1382.9" y="305.9" width="1.3" height="30" fill="#35b9ec" opacity="0.45"/>
<rect x="1392.8" y="305.9" width="1.3" height="30" fill="#35b9ec" opacity="0.45"/>
<rect x="1399.8" y="305.9" width="1.3" height="30" fill="#35b9ec" opacity="0.45"/>
<rect x="1406.4" y="305.9" width="1.3" height="30" fill="#35b9ec" opacity="0.45"/>
<rect x="1422.8" y="305.9" width="1.3" height="30" fill="#35b9ec" opacity="0.45"/>
<rect x="1430.3" y="305.9" width="1.3" height="30" fill="#35b9ec" opacity="0.45"/>
<rect x="1446.8" y="305.9" width="1.3" height="30" fill="#35b9ec" opacity="0.45"/>
<rect x="1258.9" y="335.9" width="1.3" height="30" fill="#d2008a" opacity="0.45"/>
<rect x="1276.3" y="335.9" width="1.3" height="30" fill="#d2008a" opacity="0.45"/>
<rect x="1302.5" y="335.9" width="1.3" height="30" fill="#d2008a" opacity="0.45"/>
<rect x="1315.6" y="335.9" width="1.3" height="30" fill="#d2008a" opacity="0.45"/>
<rect x="1337.0" y="335.9" width="1.3" height="30" fill="#d2008a" opacity="0.45"/>
<rect x="1344.0" y="335.9" width="1.3" height="30" fill="#d2008a" opacity="0.45"/>
<rect x="1349.3" y="335.9" width="1.3" height="30" fill="#d2008a" opacity="0.45"/>
<rect x="1365.3" y="335.9" width="1.3" height="30" fill="#d2008a" opacity="0.45"/>
<rect x="1372.3" y="335.9" width="1.3" height="30" fill="#d2008a" opacity="0.45"/>
<rect x="1383.3" y="335.9" width="1.3" height="30" fill="#d2008a" opacity="0.45"/>
<rect x="1393.3" y="335.9" width="1.3" height="30" fill="#d2008a" opacity="0.45"/>
<rect x="1399.9" y="335.9" width="1.3" height="30" fill="#d2008a" opacity="0.45"/>
<rect x="1406.9" y="335.9" width="1.3" height="30" fill="#d2008a" opacity="0.45"/>
<rect x="1422.8" y="335.9" width="1.3" height="30" fill="#d2008a" opacity="0.45"/>
<rect x="1430.3" y="335.9" width="1.3" height="30" fill="#d2008a" opacity="0.45"/>
<rect x="1259.2" y="371.7" width="1.3" height="30" fill="#35b9ec"/>
<rect x="1293.0" y="371.7" width="1.3" height="30" fill="#35b9ec"/>
<rect x="1303.8" y="371.7" width="1.3" height="30" fill="#35b9ec"/>
<rect x="1311.1" y="371.7" width="1.3" height="30" fill="#35b9ec"/>
<rect x="1315.9" y="371.7" width="1.3" height="30" fill="#35b9ec"/>
<rect x="1339.3" y="371.7" width="1.3" height="30" fill="#35b9ec"/>
<rect x="1343.8" y="371.7" width="1.3" height="30" fill="#35b9ec"/>
<rect x="1345.8" y="371.7" width="1.3" height="30" fill="#35b9ec"/>
<rect x="1347.1" y="371.7" width="1.3" height="30" fill="#35b9ec"/>
<rect x="1348.8" y="371.7" width="1.3" height="30" fill="#35b9ec"/>
<rect x="1351.8" y="371.7" width="1.3" height="30" fill="#35b9ec"/>
<rect x="1356.4" y="371.7" width="1.3" height="30" fill="#35b9ec"/>
<rect x="1366.1" y="371.7" width="1.3" height="30" fill="#35b9ec"/>
<rect x="1368.8" y="371.7" width="1.3" height="30" fill="#35b9ec"/>
<rect x="1371.8" y="371.7" width="1.3" height="30" fill="#35b9ec"/>
<rect x="1375.8" y="371.7" width="1.3" height="30" fill="#35b9ec"/>
<rect x="1381.5" y="371.7" width="1.3" height="30" fill="#35b9ec"/>
<rect x="1386.8" y="371.7" width="1.3" height="30" fill="#35b9ec"/>
<rect x="1392.5" y="371.7" width="1.3" height="30" fill="#35b9ec"/>
<rect x="1396.9" y="371.7" width="1.3" height="30" fill="#35b9ec"/>
<rect x="1404.0" y="371.7" width="1.3" height="30" fill="#35b9ec"/>
<rect x="1421.2" y="371.7" width="1.3" height="30" fill="#35b9ec"/>
<rect x="1427.3" y="371.7" width="1.3" height="30" fill="#35b9ec"/>
<rect x="1432.2" y="371.7" width="1.3" height="30" fill="#35b9ec"/>
<rect x="1444.8" y="371.7" width="1.3" height="30" fill="#35b9ec"/>
<rect x="1249.1" y="401.7" width="1.3" height="30" fill="#d2008a"/>
<rect x="1262.8" y="401.7" width="1.3" height="30" fill="#d2008a"/>
<rect x="1293.3" y="401.7" width="1.3" height="30" fill="#d2008a"/>
<rect x="1304.8" y="401.7" width="1.3" height="30" fill="#d2008a"/>
<rect x="1311.3" y="401.7" width="1.3" height="30" fill="#d2008a"/>
<rect x="1316.3" y="401.7" width="1.3" height="30" fill="#d2008a"/>
<rect x="1339.3" y="401.7" width="1.3" height="30" fill="#d2008a"/>
<rect x="1343.8" y="401.7" width="1.3" height="30" fill="#d2008a"/>
<rect x="1345.6" y="401.7" width="1.3" height="30" fill="#d2008a"/>
<rect x="1347.1" y="401.7" width="1.3" height="30" fill="#d2008a"/>
<rect x="1348.8" y="401.7" width="1.3" height="30" fill="#d2008a"/>
<rect x="1352.0" y="401.7" width="1.3" height="30" fill="#d2008a"/>
<rect x="1356.6" y="401.7" width="1.3" height="30" fill="#d2008a"/>
<rect x="1366.3" y="401.7" width="1.3" height="30" fill="#d2008a"/>
<rect x="1369.0" y="401.7" width="1.3" height="30" fill="#d2008a"/>
<rect x="1372.1" y="401.7" width="1.3" height="30" fill="#d2008a"/>
<rect x="1375.9" y="401.7" width="1.3" height="30" fill="#d2008a"/>
<rect x="1381.6" y="401.7" width="1.3" height="30" fill="#d2008a"/>
<rect x="1386.8" y="401.7" width="1.3" height="30" fill="#d2008a"/>
<rect x="1393.3" y="401.7" width="1.3" height="30" fill="#d2008a"/>
<rect x="1397.1" y="401.7" width="1.3" height="30" fill="#d2008a"/>
<rect x="1404.5" y="401.7" width="1.3" height="30" fill="#d2008a"/>
<rect x="1421.5" y="401.7" width="1.3" height="30" fill="#d2008a"/>
<rect x="1427.6" y="401.7" width="1.3" height="30" fill="#d2008a"/>
<rect x="1432.3" y="401.7" width="1.3" height="30" fill="#d2008a"/>
<rect x="1249.4" y="380.7" width="10.5" height="41" rx="1.5" fill="#edb120"/>
<rect x="1263.0" y="380.7" width="76.5" height="41" rx="1.5" fill="#edb120"/>
<rect x="1341.0" y="380.7" width="24.9" height="41" rx="1.5" fill="#edb120"/>
<rect x="1367.0" y="380.7" width="37.7" height="41" rx="1.5" fill="#edb120"/>
<rect x="1407.1" y="380.7" width="37.7" height="41" rx="1.5" fill="#edb120"/>
<rect x="1259.2" y="371.7" width="1.3" height="30" fill="#35b9ec" opacity="0.45"/>
<rect x="1293.0" y="371.7" width="1.3" height="30" fill="#35b9ec" opacity="0.45"/>
<rect x="1303.8" y="371.7" width="1.3" height="30" fill="#35b9ec" opacity="0.45"/>
<rect x="1311.1" y="371.7" width="1.3" height="30" fill="#35b9ec" opacity="0.45"/>
<rect x="1315.9" y="371.7" width="1.3" height="30" fill="#35b9ec" opacity="0.45"/>
<rect x="1339.3" y="371.7" width="1.3" height="30" fill="#35b9ec" opacity="0.45"/>
<rect x="1343.8" y="371.7" width="1.3" height="30" fill="#35b9ec" opacity="0.45"/>
<rect x="1345.8" y="371.7" width="1.3" height="30" fill="#35b9ec" opacity="0.45"/>
<rect x="1347.1" y="371.7" width="1.3" height="30" fill="#35b9ec" opacity="0.45"/>
<rect x="1348.8" y="371.7" width="1.3" height="30" fill="#35b9ec" opacity="0.45"/>
<rect x="1351.8" y="371.7" width="1.3" height="30" fill="#35b9ec" opacity="0.45"/>
<rect x="1356.4" y="371.7" width="1.3" height="30" fill="#35b9ec" opacity="0.45"/>
<rect x="1366.1" y="371.7" width="1.3" height="30" fill="#35b9ec" opacity="0.45"/>
<rect x="1368.8" y="371.7" width="1.3" height="30" fill="#35b9ec" opacity="0.45"/>
<rect x="1371.8" y="371.7" width="1.3" height="30" fill="#35b9ec" opacity="0.45"/>
<rect x="1375.8" y="371.7" width="1.3" height="30" fill="#35b9ec" opacity="0.45"/>
<rect x="1381.5" y="371.7" width="1.3" height="30" fill="#35b9ec" opacity="0.45"/>
<rect x="1386.8" y="371.7" width="1.3" height="30" fill="#35b9ec" opacity="0.45"/>
<rect x="1392.5" y="371.7" width="1.3" height="30" fill="#35b9ec" opacity="0.45"/>
<rect x="1396.9" y="371.7" width="1.3" height="30" fill="#35b9ec" opacity="0.45"/>
<rect x="1404.0" y="371.7" width="1.3" height="30" fill="#35b9ec" opacity="0.45"/>
<rect x="1421.2" y="371.7" width="1.3" height="30" fill="#35b9ec" opacity="0.45"/>
<rect x="1427.3" y="371.7" width="1.3" height="30" fill="#35b9ec" opacity="0.45"/>
<rect x="1432.2" y="371.7" width="1.3" height="30" fill="#35b9ec" opacity="0.45"/>
<rect x="1444.8" y="371.7" width="1.3" height="30" fill="#35b9ec" opacity="0.45"/>
<rect x="1249.1" y="401.7" width="1.3" height="30" fill="#d2008a" opacity="0.45"/>
<rect x="1262.8" y="401.7" width="1.3" height="30" fill="#d2008a" opacity="0.45"/>
<rect x="1293.3" y="401.7" width="1.3" height="30" fill="#d2008a" opacity="0.45"/>
<rect x="1304.8" y="401.7" width="1.3" height="30" fill="#d2008a" opacity="0.45"/>
<rect x="1311.3" y="401.7" width="1.3" height="30" fill="#d2008a" opacity="0.45"/>
<rect x="1316.3" y="401.7" width="1.3" height="30" fill="#d2008a" opacity="0.45"/>
<rect x="1339.3" y="401.7" width="1.3" height="30" fill="#d2008a" opacity="0.45"/>
<rect x="1343.8" y="401.7" width="1.3" height="30" fill="#d2008a" opacity="0.45"/>
<rect x="1345.6" y="401.7" width="1.3" height="30" fill="#d2008a" opacity="0.45"/>
<rect x="1347.1" y="401.7" width="1.3" height="30" fill="#d2008a" opacity="0.45"/>
<rect x="1348.8" y="401.7" width="1.3" height="30" fill="#d2008a" opacity="0.45"/>
<rect x="1352.0" y="401.7" width="1.3" height="30" fill="#d2008a" opacity="0.45"/>
<rect x="1356.6" y="401.7" width="1.3" height="30" fill="#d2008a" opacity="0.45"/>
<rect x="1366.3" y="401.7" width="1.3" height="30" fill="#d2008a" opacity="0.45"/>
<rect x="1369.0" y="401.7" width="1.3" height="30" fill="#d2008a" opacity="0.45"/>
<rect x="1372.1" y="401.7" width="1.3" height="30" fill="#d2008a" opacity="0.45"/>
<rect x="1375.9" y="401.7" width="1.3" height="30" fill="#d2008a" opacity="0.45"/>
<rect x="1381.6" y="401.7" width="1.3" height="30" fill="#d2008a" opacity="0.45"/>
<rect x="1386.8" y="401.7" width="1.3" height="30" fill="#d2008a" opacity="0.45"/>
<rect x="1393.3" y="401.7" width="1.3" height="30" fill="#d2008a" opacity="0.45"/>
<rect x="1397.1" y="401.7" width="1.3" height="30" fill="#d2008a" opacity="0.45"/>
<rect x="1404.5" y="401.7" width="1.3" height="30" fill="#d2008a" opacity="0.45"/>
<rect x="1421.5" y="401.7" width="1.3" height="30" fill="#d2008a" opacity="0.45"/>
<rect x="1427.6" y="401.7" width="1.3" height="30" fill="#d2008a" opacity="0.45"/>
<rect x="1432.3" y="401.7" width="1.3" height="30" fill="#d2008a" opacity="0.45"/>
<rect x="1309.2" y="437.6" width="1.3" height="30" fill="#35b9ec"/>
<rect x="1332.1" y="437.6" width="1.3" height="30" fill="#35b9ec"/>
<rect x="1337.2" y="437.6" width="1.3" height="30" fill="#35b9ec"/>
<rect x="1341.8" y="437.6" width="1.3" height="30" fill="#35b9ec"/>
<rect x="1346.3" y="437.6" width="1.3" height="30" fill="#35b9ec"/>
<rect x="1349.8" y="437.6" width="1.3" height="30" fill="#35b9ec"/>
<rect x="1357.8" y="437.6" width="1.3" height="30" fill="#35b9ec"/>
<rect x="1365.4" y="437.6" width="1.3" height="30" fill="#35b9ec"/>
<rect x="1369.3" y="437.6" width="1.3" height="30" fill="#35b9ec"/>
<rect x="1373.4" y="437.6" width="1.3" height="30" fill="#35b9ec"/>
<rect x="1381.4" y="437.6" width="1.3" height="30" fill="#35b9ec"/>
<rect x="1387.5" y="437.6" width="1.3" height="30" fill="#35b9ec"/>
<rect x="1393.9" y="437.6" width="1.3" height="30" fill="#35b9ec"/>
<rect x="1397.3" y="437.6" width="1.3" height="30" fill="#35b9ec"/>
<rect x="1404.0" y="437.6" width="1.3" height="30" fill="#35b9ec"/>
<rect x="1419.9" y="437.6" width="1.3" height="30" fill="#35b9ec"/>
<rect x="1427.1" y="437.6" width="1.3" height="30" fill="#35b9ec"/>
<rect x="1443.8" y="437.6" width="1.3" height="30" fill="#35b9ec"/>
<rect x="1447.3" y="437.6" width="1.3" height="30" fill="#35b9ec"/>
<rect x="1278.8" y="467.6" width="1.3" height="30" fill="#d2008a"/>
<rect x="1309.6" y="467.6" width="1.3" height="30" fill="#d2008a"/>
<rect x="1332.2" y="467.6" width="1.3" height="30" fill="#d2008a"/>
<rect x="1338.3" y="467.6" width="1.3" height="30" fill="#d2008a"/>
<rect x="1342.1" y="467.6" width="1.3" height="30" fill="#d2008a"/>
<rect x="1346.8" y="467.6" width="1.3" height="30" fill="#d2008a"/>
<rect x="1349.9" y="467.6" width="1.3" height="30" fill="#d2008a"/>
<rect x="1357.8" y="467.6" width="1.3" height="30" fill="#d2008a"/>
<rect x="1366.3" y="467.6" width="1.3" height="30" fill="#d2008a"/>
<rect x="1369.8" y="467.6" width="1.3" height="30" fill="#d2008a"/>
<rect x="1373.6" y="467.6" width="1.3" height="30" fill="#d2008a"/>
<rect x="1382.3" y="467.6" width="1.3" height="30" fill="#d2008a"/>
<rect x="1387.8" y="467.6" width="1.3" height="30" fill="#d2008a"/>
<rect x="1394.3" y="467.6" width="1.3" height="30" fill="#d2008a"/>
<rect x="1397.6" y="467.6" width="1.3" height="30" fill="#d2008a"/>
<rect x="1404.3" y="467.6" width="1.3" height="30" fill="#d2008a"/>
<rect x="1420.1" y="467.6" width="1.3" height="30" fill="#d2008a"/>
<rect x="1427.3" y="467.6" width="1.3" height="30" fill="#d2008a"/>
<rect x="1444.3" y="467.6" width="1.3" height="30" fill="#d2008a"/>
<rect x="1279.1" y="446.6" width="57.9" height="41" rx="1.5" fill="#edb120"/>
<rect x="1338.5" y="446.6" width="2.6" height="41" rx="1.5" fill="#edb120"/>
<rect x="1343.4" y="446.6" width="49.3" height="41" rx="1.5" fill="#edb120"/>
<rect x="1395.1" y="446.6" width="52.2" height="41" rx="1.5" fill="#edb120"/>
<rect x="1309.2" y="437.6" width="1.3" height="30" fill="#35b9ec" opacity="0.45"/>
<rect x="1332.1" y="437.6" width="1.3" height="30" fill="#35b9ec" opacity="0.45"/>
<rect x="1337.2" y="437.6" width="1.3" height="30" fill="#35b9ec" opacity="0.45"/>
<rect x="1341.8" y="437.6" width="1.3" height="30" fill="#35b9ec" opacity="0.45"/>
<rect x="1346.3" y="437.6" width="1.3" height="30" fill="#35b9ec" opacity="0.45"/>
<rect x="1349.8" y="437.6" width="1.3" height="30" fill="#35b9ec" opacity="0.45"/>
<rect x="1357.8" y="437.6" width="1.3" height="30" fill="#35b9ec" opacity="0.45"/>
<rect x="1365.4" y="437.6" width="1.3" height="30" fill="#35b9ec" opacity="0.45"/>
<rect x="1369.3" y="437.6" width="1.3" height="30" fill="#35b9ec" opacity="0.45"/>
<rect x="1373.4" y="437.6" width="1.3" height="30" fill="#35b9ec" opacity="0.45"/>
<rect x="1381.4" y="437.6" width="1.3" height="30" fill="#35b9ec" opacity="0.45"/>
<rect x="1387.5" y="437.6" width="1.3" height="30" fill="#35b9ec" opacity="0.45"/>
<rect x="1393.9" y="437.6" width="1.3" height="30" fill="#35b9ec" opacity="0.45"/>
<rect x="1397.3" y="437.6" width="1.3" height="30" fill="#35b9ec" opacity="0.45"/>
<rect x="1404.0" y="437.6" width="1.3" height="30" fill="#35b9ec" opacity="0.45"/>
<rect x="1419.9" y="437.6" width="1.3" height="30" fill="#35b9ec" opacity="0.45"/>
<rect x="1427.1" y="437.6" width="1.3" height="30" fill="#35b9ec" opacity="0.45"/>
<rect x="1443.8" y="437.6" width="1.3" height="30" fill="#35b9ec" opacity="0.45"/>
<rect x="1447.3" y="437.6" width="1.3" height="30" fill="#35b9ec" opacity="0.45"/>
<rect x="1278.8" y="467.6" width="1.3" height="30" fill="#d2008a" opacity="0.45"/>
<rect x="1309.6" y="467.6" width="1.3" height="30" fill="#d2008a" opacity="0.45"/>
<rect x="1332.2" y="467.6" width="1.3" height="30" fill="#d2008a" opacity="0.45"/>
<rect x="1338.3" y="467.6" width="1.3" height="30" fill="#d2008a" opacity="0.45"/>
<rect x="1342.1" y="467.6" width="1.3" height="30" fill="#d2008a" opacity="0.45"/>
<rect x="1346.8" y="467.6" width="1.3" height="30" fill="#d2008a" opacity="0.45"/>
<rect x="1349.9" y="467.6" width="1.3" height="30" fill="#d2008a" opacity="0.45"/>
<rect x="1357.8" y="467.6" width="1.3" height="30" fill="#d2008a" opacity="0.45"/>
<rect x="1366.3" y="467.6" width="1.3" height="30" fill="#d2008a" opacity="0.45"/>
<rect x="1369.8" y="467.6" width="1.3" height="30" fill="#d2008a" opacity="0.45"/>
<rect x="1373.6" y="467.6" width="1.3" height="30" fill="#d2008a" opacity="0.45"/>
<rect x="1382.3" y="467.6" width="1.3" height="30" fill="#d2008a" opacity="0.45"/>
<rect x="1387.8" y="467.6" width="1.3" height="30" fill="#d2008a" opacity="0.45"/>
<rect x="1394.3" y="467.6" width="1.3" height="30" fill="#d2008a" opacity="0.45"/>
<rect x="1397.6" y="467.6" width="1.3" height="30" fill="#d2008a" opacity="0.45"/>
<rect x="1404.3" y="467.6" width="1.3" height="30" fill="#d2008a" opacity="0.45"/>
<rect x="1420.1" y="467.6" width="1.3" height="30" fill="#d2008a" opacity="0.45"/>
<rect x="1427.3" y="467.6" width="1.3" height="30" fill="#d2008a" opacity="0.45"/>
<rect x="1444.3" y="467.6" width="1.3" height="30" fill="#d2008a" opacity="0.45"/>
<rect x="1294.3" y="503.4" width="1.3" height="30" fill="#35b9ec"/>
<rect x="1323.8" y="503.4" width="1.3" height="30" fill="#35b9ec"/>
<rect x="1338.2" y="503.4" width="1.3" height="30" fill="#35b9ec"/>
<rect x="1342.8" y="503.4" width="1.3" height="30" fill="#35b9ec"/>
<rect x="1347.9" y="503.4" width="1.3" height="30" fill="#35b9ec"/>
<rect x="1356.6" y="503.4" width="1.3" height="30" fill="#35b9ec"/>
<rect x="1366.1" y="503.4" width="1.3" height="30" fill="#35b9ec"/>
<rect x="1371.6" y="503.4" width="1.3" height="30" fill="#35b9ec"/>
<rect x="1377.9" y="503.4" width="1.3" height="30" fill="#35b9ec"/>
<rect x="1383.8" y="503.4" width="1.3" height="30" fill="#35b9ec"/>
<rect x="1386.8" y="503.4" width="1.3" height="30" fill="#35b9ec"/>
<rect x="1392.8" y="503.4" width="1.3" height="30" fill="#35b9ec"/>
<rect x="1397.6" y="503.4" width="1.3" height="30" fill="#35b9ec"/>
<rect x="1404.3" y="503.4" width="1.3" height="30" fill="#35b9ec"/>
<rect x="1421.5" y="503.4" width="1.3" height="30" fill="#35b9ec"/>
<rect x="1427.5" y="503.4" width="1.3" height="30" fill="#35b9ec"/>
<rect x="1432.5" y="503.4" width="1.3" height="30" fill="#35b9ec"/>
<rect x="1444.3" y="503.4" width="1.3" height="30" fill="#35b9ec"/>
<rect x="1447.8" y="503.4" width="1.3" height="30" fill="#35b9ec"/>
<rect x="1273.8" y="533.4" width="1.3" height="30" fill="#d2008a"/>
<rect x="1294.5" y="533.4" width="1.3" height="30" fill="#d2008a"/>
<rect x="1323.9" y="533.4" width="1.3" height="30" fill="#d2008a"/>
<rect x="1337.8" y="533.4" width="1.3" height="30" fill="#d2008a"/>
<rect x="1342.8" y="533.4" width="1.3" height="30" fill="#d2008a"/>
<rect x="1348.1" y="533.4" width="1.3" height="30" fill="#d2008a"/>
<rect x="1356.6" y="533.4" width="1.3" height="30" fill="#d2008a"/>
<rect x="1366.3" y="533.4" width="1.3" height="30" fill="#d2008a"/>
<rect x="1371.8" y="533.4" width="1.3" height="30" fill="#d2008a"/>
<rect x="1377.9" y="533.4" width="1.3" height="30" fill="#d2008a"/>
<rect x="1384.0" y="533.4" width="1.3" height="30" fill="#d2008a"/>
<rect x="1386.9" y="533.4" width="1.3" height="30" fill="#d2008a"/>
<rect x="1392.9" y="533.4" width="1.3" height="30" fill="#d2008a"/>
<rect x="1397.8" y="533.4" width="1.3" height="30" fill="#d2008a"/>
<rect x="1404.4" y="533.4" width="1.3" height="30" fill="#d2008a"/>
<rect x="1421.5" y="533.4" width="1.3" height="30" fill="#d2008a"/>
<rect x="1427.8" y="533.4" width="1.3" height="30" fill="#d2008a"/>
<rect x="1433.3" y="533.4" width="1.3" height="30" fill="#d2008a"/>
<rect x="1444.5" y="533.4" width="1.3" height="30" fill="#d2008a"/>
<rect x="1274.1" y="512.4" width="63.3" height="41" rx="1.5" fill="#edb120"/>
<rect x="1339.8" y="512.4" width="9.8" height="41" rx="1.5" fill="#edb120"/>
<rect x="1351.3" y="512.4" width="70.4" height="41" rx="1.5" fill="#edb120"/>
<rect x="1423.4" y="512.4" width="4.7" height="41" rx="1.5" fill="#edb120"/>
<rect x="1430.1" y="512.4" width="18.2" height="41" rx="1.5" fill="#edb120"/>
<rect x="1294.3" y="503.4" width="1.3" height="30" fill="#35b9ec" opacity="0.45"/>
<rect x="1323.8" y="503.4" width="1.3" height="30" fill="#35b9ec" opacity="0.45"/>
<rect x="1338.2" y="503.4" width="1.3" height="30" fill="#35b9ec" opacity="0.45"/>
<rect x="1342.8" y="503.4" width="1.3" height="30" fill="#35b9ec" opacity="0.45"/>
<rect x="1347.9" y="503.4" width="1.3" height="30" fill="#35b9ec" opacity="0.45"/>
<rect x="1356.6" y="503.4" width="1.3" height="30" fill="#35b9ec" opacity="0.45"/>
<rect x="1366.1" y="503.4" width="1.3" height="30" fill="#35b9ec" opacity="0.45"/>
<rect x="1371.6" y="503.4" width="1.3" height="30" fill="#35b9ec" opacity="0.45"/>
<rect x="1377.9" y="503.4" width="1.3" height="30" fill="#35b9ec" opacity="0.45"/>
<rect x="1383.8" y="503.4" width="1.3" height="30" fill="#35b9ec" opacity="0.45"/>
<rect x="1386.8" y="503.4" width="1.3" height="30" fill="#35b9ec" opacity="0.45"/>
<rect x="1392.8" y="503.4" width="1.3" height="30" fill="#35b9ec" opacity="0.45"/>
<rect x="1397.6" y="503.4" width="1.3" height="30" fill="#35b9ec" opacity="0.45"/>
<rect x="1404.3" y="503.4" width="1.3" height="30" fill="#35b9ec" opacity="0.45"/>
<rect x="1421.5" y="503.4" width="1.3" height="30" fill="#35b9ec" opacity="0.45"/>
<rect x="1427.5" y="503.4" width="1.3" height="30" fill="#35b9ec" opacity="0.45"/>
<rect x="1432.5" y="503.4" width="1.3" height="30" fill="#35b9ec" opacity="0.45"/>
<rect x="1444.3" y="503.4" width="1.3" height="30" fill="#35b9ec" opacity="0.45"/>
<rect x="1447.8" y="503.4" width="1.3" height="30" fill="#35b9ec" opacity="0.45"/>
<rect x="1273.8" y="533.4" width="1.3" height="30" fill="#d2008a" opacity="0.45"/>
<rect x="1294.5" y="533.4" width="1.3" height="30" fill="#d2008a" opacity="0.45"/>
<rect x="1323.9" y="533.4" width="1.3" height="30" fill="#d2008a" opacity="0.45"/>
<rect x="1337.8" y="533.4" width="1.3" height="30" fill="#d2008a" opacity="0.45"/>
<rect x="1342.8" y="533.4" width="1.3" height="30" fill="#d2008a" opacity="0.45"/>
<rect x="1348.1" y="533.4" width="1.3" height="30" fill="#d2008a" opacity="0.45"/>
<rect x="1356.6" y="533.4" width="1.3" height="30" fill="#d2008a" opacity="0.45"/>
<rect x="1366.3" y="533.4" width="1.3" height="30" fill="#d2008a" opacity="0.45"/>
<rect x="1371.8" y="533.4" width="1.3" height="30" fill="#d2008a" opacity="0.45"/>
<rect x="1377.9" y="533.4" width="1.3" height="30" fill="#d2008a" opacity="0.45"/>
<rect x="1384.0" y="533.4" width="1.3" height="30" fill="#d2008a" opacity="0.45"/>
<rect x="1386.9" y="533.4" width="1.3" height="30" fill="#d2008a" opacity="0.45"/>
<rect x="1392.9" y="533.4" width="1.3" height="30" fill="#d2008a" opacity="0.45"/>
<rect x="1397.8" y="533.4" width="1.3" height="30" fill="#d2008a" opacity="0.45"/>
<rect x="1404.4" y="533.4" width="1.3" height="30" fill="#d2008a" opacity="0.45"/>
<rect x="1421.5" y="533.4" width="1.3" height="30" fill="#d2008a" opacity="0.45"/>
<rect x="1427.8" y="533.4" width="1.3" height="30" fill="#d2008a" opacity="0.45"/>
<rect x="1433.3" y="533.4" width="1.3" height="30" fill="#d2008a" opacity="0.45"/>
<rect x="1444.5" y="533.4" width="1.3" height="30" fill="#d2008a" opacity="0.45"/>
<rect x="1278.4" y="569.3" width="1.3" height="30" fill="#35b9ec"/>
<rect x="1309.8" y="569.3" width="1.3" height="30" fill="#35b9ec"/>
<rect x="1315.2" y="569.3" width="1.3" height="30" fill="#35b9ec"/>
<rect x="1341.4" y="569.3" width="1.3" height="30" fill="#35b9ec"/>
<rect x="1346.8" y="569.3" width="1.3" height="30" fill="#35b9ec"/>
<rect x="1352.4" y="569.3" width="1.3" height="30" fill="#35b9ec"/>
<rect x="1356.5" y="569.3" width="1.3" height="30" fill="#35b9ec"/>
<rect x="1367.6" y="569.3" width="1.3" height="30" fill="#35b9ec"/>
<rect x="1375.3" y="569.3" width="1.3" height="30" fill="#35b9ec"/>
<rect x="1386.0" y="569.3" width="1.3" height="30" fill="#35b9ec"/>
<rect x="1397.2" y="569.3" width="1.3" height="30" fill="#35b9ec"/>
<rect x="1407.5" y="569.3" width="1.3" height="30" fill="#35b9ec"/>
<rect x="1423.5" y="569.3" width="1.3" height="30" fill="#35b9ec"/>
<rect x="1432.1" y="569.3" width="1.3" height="30" fill="#35b9ec"/>
<rect x="1449.2" y="569.3" width="1.3" height="30" fill="#35b9ec"/>
<rect x="1265.9" y="599.3" width="1.3" height="30" fill="#d2008a"/>
<rect x="1280.1" y="599.3" width="1.3" height="30" fill="#d2008a"/>
<rect x="1310.2" y="599.3" width="1.3" height="30" fill="#d2008a"/>
<rect x="1315.6" y="599.3" width="1.3" height="30" fill="#d2008a"/>
<rect x="1342.5" y="599.3" width="1.3" height="30" fill="#d2008a"/>
<rect x="1347.0" y="599.3" width="1.3" height="30" fill="#d2008a"/>
<rect x="1352.6" y="599.3" width="1.3" height="30" fill="#d2008a"/>
<rect x="1356.8" y="599.3" width="1.3" height="30" fill="#d2008a"/>
<rect x="1367.6" y="599.3" width="1.3" height="30" fill="#d2008a"/>
<rect x="1376.3" y="599.3" width="1.3" height="30" fill="#d2008a"/>
<rect x="1386.6" y="599.3" width="1.3" height="30" fill="#d2008a"/>
<rect x="1398.1" y="599.3" width="1.3" height="30" fill="#d2008a"/>
<rect x="1407.8" y="599.3" width="1.3" height="30" fill="#d2008a"/>
<rect x="1423.6" y="599.3" width="1.3" height="30" fill="#d2008a"/>
<rect x="1432.3" y="599.3" width="1.3" height="30" fill="#d2008a"/>
<rect x="1266.2" y="578.3" width="12.5" height="41" rx="1.5" fill="#edb120"/>
<rect x="1280.2" y="578.3" width="60.7" height="41" rx="1.5" fill="#edb120"/>
<rect x="1342.5" y="578.3" width="24.3" height="41" rx="1.5" fill="#edb120"/>
<rect x="1369.0" y="578.3" width="6.2" height="41" rx="1.5" fill="#edb120"/>
<rect x="1377.2" y="578.3" width="72.7" height="41" rx="1.5" fill="#edb120"/>
<rect x="1278.4" y="569.3" width="1.3" height="30" fill="#35b9ec" opacity="0.45"/>
<rect x="1309.8" y="569.3" width="1.3" height="30" fill="#35b9ec" opacity="0.45"/>
<rect x="1315.2" y="569.3" width="1.3" height="30" fill="#35b9ec" opacity="0.45"/>
<rect x="1341.4" y="569.3" width="1.3" height="30" fill="#35b9ec" opacity="0.45"/>
<rect x="1346.8" y="569.3" width="1.3" height="30" fill="#35b9ec" opacity="0.45"/>
<rect x="1352.4" y="569.3" width="1.3" height="30" fill="#35b9ec" opacity="0.45"/>
<rect x="1356.5" y="569.3" width="1.3" height="30" fill="#35b9ec" opacity="0.45"/>
<rect x="1367.6" y="569.3" width="1.3" height="30" fill="#35b9ec" opacity="0.45"/>
<rect x="1375.3" y="569.3" width="1.3" height="30" fill="#35b9ec" opacity="0.45"/>
<rect x="1386.0" y="569.3" width="1.3" height="30" fill="#35b9ec" opacity="0.45"/>
<rect x="1397.2" y="569.3" width="1.3" height="30" fill="#35b9ec" opacity="0.45"/>
<rect x="1407.5" y="569.3" width="1.3" height="30" fill="#35b9ec" opacity="0.45"/>
<rect x="1423.5" y="569.3" width="1.3" height="30" fill="#35b9ec" opacity="0.45"/>
<rect x="1432.1" y="569.3" width="1.3" height="30" fill="#35b9ec" opacity="0.45"/>
<rect x="1449.2" y="569.3" width="1.3" height="30" fill="#35b9ec" opacity="0.45"/>
<rect x="1265.9" y="599.3" width="1.3" height="30" fill="#d2008a" opacity="0.45"/>
<rect x="1280.1" y="599.3" width="1.3" height="30" fill="#d2008a" opacity="0.45"/>
<rect x="1310.2" y="599.3" width="1.3" height="30" fill="#d2008a" opacity="0.45"/>
<rect x="1315.6" y="599.3" width="1.3" height="30" fill="#d2008a" opacity="0.45"/>
<rect x="1342.5" y="599.3" width="1.3" height="30" fill="#d2008a" opacity="0.45"/>
<rect x="1347.0" y="599.3" width="1.3" height="30" fill="#d2008a" opacity="0.45"/>
<rect x="1352.6" y="599.3" width="1.3" height="30" fill="#d2008a" opacity="0.45"/>
<rect x="1356.8" y="599.3" width="1.3" height="30" fill="#d2008a" opacity="0.45"/>
<rect x="1367.6" y="599.3" width="1.3" height="30" fill="#d2008a" opacity="0.45"/>
<rect x="1376.3" y="599.3" width="1.3" height="30" fill="#d2008a" opacity="0.45"/>
<rect x="1386.6" y="599.3" width="1.3" height="30" fill="#d2008a" opacity="0.45"/>
<rect x="1398.1" y="599.3" width="1.3" height="30" fill="#d2008a" opacity="0.45"/>
<rect x="1407.8" y="599.3" width="1.3" height="30" fill="#d2008a" opacity="0.45"/>
<rect x="1423.6" y="599.3" width="1.3" height="30" fill="#d2008a" opacity="0.45"/>
<rect x="1432.3" y="599.3" width="1.3" height="30" fill="#d2008a" opacity="0.45"/>
<rect x="1248.7" y="636.1" width="1.4" height="29" fill="#35b9ec"/>
<rect x="1258.3" y="636.1" width="1.5" height="29" fill="#35b9ec"/>
<rect x="1262.2" y="636.1" width="1.7" height="29" fill="#35b9ec"/>
<rect x="1265.4" y="636.1" width="1.5" height="29" fill="#35b9ec"/>
<rect x="1273.2" y="636.1" width="1.4" height="29" fill="#35b9ec"/>
<rect x="1276.0" y="636.1" width="5.0" height="29" fill="#35b9ec"/>
<rect x="1293.2" y="636.1" width="2.3" height="29" fill="#35b9ec"/>
<rect x="1302.3" y="636.1" width="2.5" height="29" fill="#35b9ec"/>
<rect x="1309.2" y="636.1" width="3.2" height="29" fill="#35b9ec"/>
<rect x="1315.1" y="636.1" width="1.9" height="29" fill="#35b9ec"/>
<rect x="1320.3" y="636.1" width="1.5" height="29" fill="#35b9ec"/>
<rect x="1323.7" y="636.1" width="1.5" height="29" fill="#35b9ec"/>
<rect x="1331.9" y="636.1" width="1.2" height="29" fill="#35b9ec"/>
<rect x="1336.7" y="636.1" width="1.6" height="29" fill="#35b9ec"/>
<rect x="1338.9" y="636.1" width="1.6" height="29" fill="#35b9ec"/>
<rect x="1341.1" y="636.1" width="4.2" height="29" fill="#35b9ec"/>
<rect x="1346.0" y="636.1" width="5.2" height="29" fill="#35b9ec"/>
<rect x="1352.0" y="636.1" width="1.9" height="29" fill="#35b9ec"/>
<rect x="1356.0" y="636.1" width="2.9" height="29" fill="#35b9ec"/>
<rect x="1365.0" y="636.1" width="3.3" height="29" fill="#35b9ec"/>
<rect x="1369.1" y="636.1" width="2.6" height="29" fill="#35b9ec"/>
<rect x="1372.3" y="636.1" width="2.4" height="29" fill="#35b9ec"/>
<rect x="1375.3" y="636.1" width="3.8" height="29" fill="#35b9ec"/>
<rect x="1381.1" y="636.1" width="7.8" height="29" fill="#35b9ec"/>
<rect x="1392.1" y="636.1" width="2.7" height="29" fill="#35b9ec"/>
<rect x="1396.1" y="636.1" width="4.8" height="29" fill="#35b9ec"/>
<rect x="1403.8" y="636.1" width="5.2" height="29" fill="#35b9ec"/>
<rect x="1420.0" y="636.1" width="4.9" height="29" fill="#35b9ec"/>
<rect x="1427.0" y="636.1" width="1.9" height="29" fill="#35b9ec"/>
<rect x="1430.1" y="636.1" width="1.2" height="29" fill="#35b9ec"/>
<rect x="1432.1" y="636.1" width="2.0" height="29" fill="#35b9ec"/>
<rect x="1443.9" y="636.1" width="1.9" height="29" fill="#35b9ec"/>
<rect x="1259.5" y="665.1" width="1.7" height="30" fill="#d2008a"/>
<rect x="1274.0" y="665.1" width="1.3" height="30" fill="#d2008a"/>
<rect x="1279.0" y="665.1" width="1.7" height="30" fill="#d2008a"/>
<rect x="1293.7" y="665.1" width="2.4" height="30" fill="#d2008a"/>
<rect x="1303.1" y="665.1" width="2.7" height="30" fill="#d2008a"/>
<rect x="1310.0" y="665.1" width="3.1" height="30" fill="#d2008a"/>
<rect x="1315.9" y="665.1" width="2.0" height="30" fill="#d2008a"/>
<rect x="1321.0" y="665.1" width="1.6" height="30" fill="#d2008a"/>
<rect x="1324.2" y="665.1" width="1.7" height="30" fill="#d2008a"/>
<rect x="1332.5" y="665.1" width="1.5" height="30" fill="#d2008a"/>
<rect x="1337.8" y="665.1" width="3.1" height="30" fill="#d2008a"/>
<rect x="1342.1" y="665.1" width="3.7" height="30" fill="#d2008a"/>
<rect x="1346.8" y="665.1" width="8.1" height="30" fill="#d2008a"/>
<rect x="1356.9" y="665.1" width="3.0" height="30" fill="#d2008a"/>
<rect x="1366.0" y="665.1" width="5.0" height="30" fill="#d2008a"/>
<rect x="1372.0" y="665.1" width="3.1" height="30" fill="#d2008a"/>
<rect x="1375.9" y="665.1" width="3.9" height="30" fill="#d2008a"/>
<rect x="1382.0" y="665.1" width="7.2" height="30" fill="#d2008a"/>
<rect x="1393.0" y="665.1" width="2.9" height="30" fill="#d2008a"/>
<rect x="1397.1" y="665.1" width="4.9" height="30" fill="#d2008a"/>
<rect x="1404.1" y="665.1" width="6.0" height="30" fill="#d2008a"/>
<rect x="1420.3" y="665.1" width="5.3" height="30" fill="#d2008a"/>
<rect x="1427.7" y="665.1" width="1.7" height="30" fill="#d2008a"/>
<rect x="1430.7" y="665.1" width="1.4" height="30" fill="#d2008a"/>
<rect x="1432.9" y="665.1" width="2.6" height="30" fill="#d2008a"/>
<rect x="1444.5" y="665.1" width="6.6" height="30" fill="#d2008a"/>
</svg>
<div class="a" style="left:455px;top:697.7px;width:1026.5px;height:1.4px;background:#262626"></div>
<div class="t" style="left:150.0px;width:300px;text-align:right;top:262.7px;font-size:14.7px;color:#3c3c3c;">6</div>
<div class="t" style="left:150.0px;width:300px;text-align:right;top:328.5px;font-size:14.7px;color:#3c3c3c;">5</div>
<div class="t" style="left:150.0px;width:300px;text-align:right;top:394.4px;font-size:14.7px;color:#3c3c3c;">4</div>
<div class="t" style="left:150.0px;width:300px;text-align:right;top:460.3px;font-size:14.7px;color:#3c3c3c;">3</div>
<div class="t" style="left:150.0px;width:300px;text-align:right;top:526.1px;font-size:14.7px;color:#3c3c3c;">2</div>
<div class="t" style="left:150.0px;width:300px;text-align:right;top:592.0px;font-size:14.7px;color:#3c3c3c;">1</div>
<div class="t" style="left:150.0px;width:300px;text-align:right;top:657.8px;font-size:14.7px;color:#3c3c3c;">Client</div>
<div class="t" style="left:390.1px;top:495.0px;font-size:17px;color:#3c3c3c;transform:rotate(-90deg);transform-origin:0 0">Worker</div>
<div class="t" style="left:770.0px;width:400px;text-align:center;top:720.1px;font-size:16.4px;color:#3c3c3c;">Time since monitoring start (s)</div>
<div class="a" style="left:807px;top:751px;width:325px;height:21px;background:#fff;border:1px solid #262626"></div>
<div class="a" style="left:812.4px;top:755.5px;width:49.8px;height:11.5px;background:#edb120;border:1px solid #262626;border-radius:1px"></div>
<div class="t" style="left:866.3px;top:753.8px;font-size:13.2px;color:#3c3c3c;">parfeval</div>
<div class="a" style="left:925.2px;top:755.5px;width:50.2px;height:11.5px;background:#33bbee;border:1px solid #262626;border-radius:1px"></div>
<div class="t" style="left:979.5px;top:753.8px;font-size:13.2px;color:#3c3c3c;">Send</div>
<div class="a" style="left:1021.1px;top:755.5px;width:51.2px;height:11.5px;background:#d4008c;border:1px solid #262626;border-radius:1px"></div>
<div class="t" style="left:1076.5px;top:753.8px;font-size:13.2px;color:#3c3c3c;">Receive</div>
<div class="a" style="left:377px;top:824px;width:1123px;height:1px;background:#c4c4c4"></div>
<div class="a" style="left:377px;top:825px;width:1123px;height:28px;background:#fff"></div>
<div class="a" style="left:377px;top:853px;width:1123px;height:1px;background:#c4c4c4"></div>
<div class="t" style="left:410.0px;top:833.5px;font-size:16px;color:#222;">Worker Summary</div>
<div class="a" style="left:1477.40px;top:833.30px;width:2.2px;height:2.2px;background:#606060;transform:rotate(45deg)"></div><div class="a" style="left:1477.40px;top:838.30px;width:2.2px;height:2.2px;background:#606060;transform:rotate(45deg)"></div><div class="a" style="left:1477.40px;top:843.30px;width:2.2px;height:2.2px;background:#606060;transform:rotate(45deg)"></div>
<div class="a" style="left:390px;top:867px;width:1099px;height:130px;border:1px solid #808080;background:#f0f0f0"></div>
<div class="a" style="left:391px;top:868px;width:1097px;height:32px;background:#f4f4f4"></div>
<div class="a" style="left:391px;top:900px;width:1097px;height:1px;background:#808080"></div>
<div class="a" style="left:570px;top:868px;width:1px;height:32px;background:#808080"></div>
<div class="a" style="left:750px;top:868px;width:1px;height:32px;background:#808080"></div>
<div class="a" style="left:929px;top:868px;width:1px;height:32px;background:#808080"></div>
<div class="a" style="left:1108px;top:868px;width:1px;height:32px;background:#808080"></div>
<div class="a" style="left:1288px;top:868px;width:1px;height:32px;background:#808080"></div>
<div class="a" style="left:1468px;top:868px;width:1px;height:32px;background:#808080"></div>
<div class="t" style="left:394.8px;top:877.7px;font-size:14.5px;color:#111;font-weight:bold">Worker</div>
<div class="t" style="left:574.8px;top:877.7px;font-size:14.5px;color:#111;font-weight:bold">Busy</div>
<div class="t" style="left:754.8px;top:877.7px;font-size:14.5px;color:#111;font-weight:bold">Send Time</div>
<div class="t" style="left:933.8px;top:877.7px;font-size:14.5px;color:#111;font-weight:bold">Receive Time</div>
<div class="t" style="left:1112.8px;top:877.7px;font-size:14.5px;color:#111;font-weight:bold">Bytes Sent</div>
<div class="t" style="left:1292.8px;top:877.7px;font-size:14.5px;color:#111;font-weight:bold">Bytes Received</div>
<div class="a" style="left:391px;top:901px;width:1077px;height:95px;overflow:hidden">
<div class="a" style="left:0;top:0px;width:1077px;height:29px;background:#fff"></div>
<div class="a" style="left:0;top:29px;width:1077px;height:1px;background:#808080"></div>
<div class="t" style="left:4.0px;top:4.9px;font-size:15px;color:#3c3c3c;">Client</div>
<div class="t" style="left:54.0px;width:300px;text-align:right;top:4.9px;font-size:15px;color:#3c3c3c;">00:00:00.000</div>
<div class="t" style="left:233.0px;width:300px;text-align:right;top:4.9px;font-size:15px;color:#3c3c3c;">00:00:00.004</div>
<div class="t" style="left:412.0px;width:300px;text-align:right;top:4.9px;font-size:15px;color:#3c3c3c;">00:00:00.005</div>
<div class="t" style="left:721.5px;top:4.9px;font-size:15px;color:#3c3c3c;">173.05 kB</div>
<div class="t" style="left:901.5px;top:4.9px;font-size:15px;color:#3c3c3c;">2.61 MB</div>
<div class="a" style="left:0;top:30px;width:1077px;height:29px;background:#f4f4f4"></div>
<div class="a" style="left:0;top:59px;width:1077px;height:1px;background:#808080"></div>
<div class="t" style="left:4.0px;top:34.9px;font-size:15px;color:#3c3c3c;">1</div>
<div class="t" style="left:54.0px;width:300px;text-align:right;top:34.9px;font-size:15px;color:#3c3c3c;">00:00:00.425</div>
<div class="t" style="left:233.0px;width:300px;text-align:right;top:34.9px;font-size:15px;color:#3c3c3c;">00:00:00.000</div>
<div class="t" style="left:412.0px;width:300px;text-align:right;top:34.9px;font-size:15px;color:#3c3c3c;">00:00:00.000</div>
<div class="t" style="left:721.5px;top:34.9px;font-size:15px;color:#3c3c3c;">358.16 kB</div>
<div class="t" style="left:901.5px;top:34.9px;font-size:15px;color:#3c3c3c;">25.96 kB</div>
<div class="a" style="left:0;top:60px;width:1077px;height:29px;background:#fff"></div>
<div class="a" style="left:0;top:89px;width:1077px;height:1px;background:#808080"></div>
<div class="t" style="left:4.0px;top:64.9px;font-size:15px;color:#3c3c3c;">2</div>
<div class="t" style="left:54.0px;width:300px;text-align:right;top:64.9px;font-size:15px;color:#3c3c3c;">00:00:00.370</div>
<div class="t" style="left:233.0px;width:300px;text-align:right;top:64.9px;font-size:15px;color:#3c3c3c;">00:00:00.000</div>
<div class="t" style="left:412.0px;width:300px;text-align:right;top:64.9px;font-size:15px;color:#3c3c3c;">00:00:00.001</div>
<div class="t" style="left:721.5px;top:64.9px;font-size:15px;color:#3c3c3c;">585.92 kB</div>
<div class="t" style="left:901.5px;top:64.9px;font-size:15px;color:#3c3c3c;">32.88 kB</div>
<div class="a" style="left:0;top:90px;width:1077px;height:29px;background:#f4f4f4"></div>
<div class="a" style="left:0;top:119px;width:1077px;height:1px;background:#808080"></div>
<div class="t" style="left:4.0px;top:94.9px;font-size:15px;color:#3c3c3c;">3</div>
<div class="t" style="left:54.0px;width:300px;text-align:right;top:94.9px;font-size:15px;color:#3c3c3c;"></div>
<div class="t" style="left:233.0px;width:300px;text-align:right;top:94.9px;font-size:15px;color:#3c3c3c;"></div>
<div class="t" style="left:412.0px;width:300px;text-align:right;top:94.9px;font-size:15px;color:#3c3c3c;"></div>
<div class="t" style="left:721.5px;top:94.9px;font-size:15px;color:#3c3c3c;"></div>
<div class="t" style="left:901.5px;top:94.9px;font-size:15px;color:#3c3c3c;"></div>
<div class="a" style="left:179px;top:0;width:1px;height:95px;background:#808080"></div>
<div class="a" style="left:359px;top:0;width:1px;height:95px;background:#808080"></div>
<div class="a" style="left:538px;top:0;width:1px;height:95px;background:#808080"></div>
<div class="a" style="left:717px;top:0;width:1px;height:95px;background:#808080"></div>
<div class="a" style="left:897px;top:0;width:1px;height:95px;background:#808080"></div>
</div>
<div class="a" style="left:1469px;top:901px;width:19px;height:95px;background:#f0f0f0"></div>
<svg class="a" style="left:1473px;top:910px" width="10" height="6" viewBox="0 0 10 6"><path d="M0 6 L5 0 L10 6 Z" fill="#a6a6a6"/></svg>
<div class="a" style="left:1469px;top:922px;width:17px;height:22px;background:#c2c2c2"></div>
<svg class="a" style="left:1473px;top:980px" width="10" height="6" viewBox="0 0 10 6"><path d="M0 0 L10 0 L5 6 Z" fill="#4a4a4a"/></svg>
 <!-- status bar -->
 <div class="a" style="left:0;top:1010px;width:1502px;height:1px;background:#b4b4b4"></div>
 <div class="a" style="left:0;top:1011px;width:1502px;height:28px;background:#e5e5e5"></div>
 <div class="a" style="left:376px;top:1011px;width:1px;height:28px;background:#cfcfcf"></div>
 <div class="a" style="left:377px;top:1010px;width:1125px;height:1px;background:#858585"></div>
 <div class="a" style="left:9px;top:1017px;width:3px;height:15px;background:#9a9a9a"></div>
 <svg class="a" style="left:12px;top:1017px" width="9" height="15" viewBox="0 0 9 15"><path d="M9 0 V15 L0 7.5 Z" fill="#9a9a9a"/></svg>
 <svg class="a" style="left:1480px;top:1019px" width="15" height="9" viewBox="0 0 15 9"><path d="M0 0 H15 L7.5 8 Z" fill="#9a9a9a"/></svg>
 <div class="a" style="left:1480px;top:1028px;width:15px;height:3px;background:#9a9a9a"></div>
</div>
<!-- window borders -->
<div class="a" style="left:0;top:0;width:1502px;height:1039px;border-left:1px solid #8c8c8c;border-right:1px solid #7a7a7a;border-bottom:1px solid #6a6a6a;border-radius:8px;pointer-events:none;border-top:1px solid transparent"></div>
</body></html>
